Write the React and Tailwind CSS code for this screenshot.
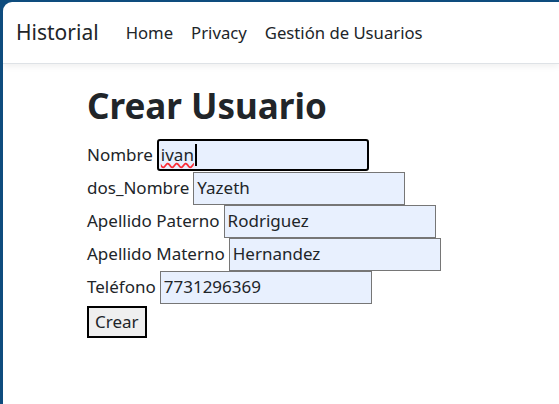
const fields = [
  { label: "Nombre", value: "ivan", focused: true },
  { label: "dos_Nombre", value: "Yazeth" },
  { label: "Apellido Paterno", value: "Rodriguez" },
  { label: "Apellido Materno", value: "Hernandez" },
  { label: "Teléfono", value: "7731296369" },
];

const App = () => {
  return (
    <div
      className="h-[404px] w-[559px] bg-[#0e4c7e] pl-[3px] pt-[2px] text-[#212529]"
      style={{ fontFamily: '"Noto Sans", "Open Sans", sans-serif' }}
    >
      <div className="h-full bg-white rounded-tl-[9px] overflow-hidden">
        {/* NAVBAR */}
        <nav className="h-[62px] flex items-center border-b border-[#dee2e6] shadow-[0_3px_6px_rgba(0,0,0,0.06)]">
          <span className="ml-[13px] text-[21px] mr-[27px]">Historial</span>
          <div className="flex gap-[18px] text-[16.7px] text-[#212529]">
            <span>Home</span>
            <span>Privacy</span>
            <span>Gestión de Usuarios</span>
          </div>
        </nav>

        {/* FORM */}
        <main className="pl-[84px] pt-[21px]">
          <h1 className="text-[35px] font-bold leading-[42px] mb-[12px]">
            Crear Usuario
          </h1>
          <div className="flex flex-col gap-px">
            {fields.map((f) => (
              <div key={f.label} className="flex items-center h-[32px] text-[17px]">
                <span className="mr-[4px]">{f.label}</span>
                <div
                  className={
                    f.focused
                      ? "w-[212px] h-[32px] bg-[#e8f0fe] border-2 border-black rounded-[3px] flex items-center px-[2px]"
                      : "w-[212px] h-[33px] bg-[#e8f0fe] border border-[#767676] flex items-center px-[3px]"
                  }
                >
                  <span
                    className={
                      f.focused
                        ? "underline decoration-wavy decoration-red-500 border-r-2 border-black pr-px leading-[22px]"
                        : ""
                    }
                  >
                    {f.value}
                  </span>
                </div>
              </div>
            ))}
            <div className="mt-[2px]">
              <button className="h-[32px] px-[6px] border-2 border-black bg-[#efefef] text-[17px]">
                Crear
              </button>
            </div>
          </div>
        </main>
      </div>
    </div>
  );
};

export default App;
